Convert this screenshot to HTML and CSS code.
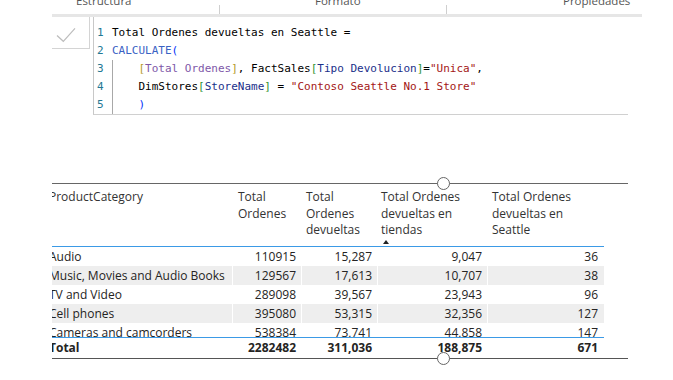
FILE: index.html
```html
<!DOCTYPE html>
<html lang="es">
<head>
<meta charset="utf-8">
<title>DAX</title>
<link rel="stylesheet" href="styles.css">
</head>
<body>
<div class="tabs">
  <div class="tab tab-1">Estructura</div>
  <div class="tab-sep"></div>
  <div class="tab tab-2">Formato</div>
  <div class="tab-sep"></div>
  <div class="tab tab-3">Propiedades</div>
</div>
<div class="band"></div>
<div class="formula">
  <div class="commit">
    <svg class="check" width="38" height="31" viewBox="0 0 38 31"><path d="M5 18.5 L11.3 24.3 L23 11.3" fill="none" stroke="#bdbdbd" stroke-width="1.2"/></svg>
  </div>
  <div class="editor">
    <div class="line"><span class="ln">1</span><span class="code">Total Ordenes devueltas en Seattle =</span></div>
    <div class="line"><span class="ln">2</span><span class="code"><span class="fn">CALCULATE</span><span class="p1">(</span></span></div>
    <div class="line"><span class="ln">3</span><span class="code"><span class="indent"></span><span class="bm">[</span><span class="ms">Total Ordenes</span><span class="bm">]</span>, FactSales<span class="bc">[</span><span class="col">Tipo Devolucion</span><span class="bc">]</span>=<span class="str">"Unica"</span>,</span></div>
    <div class="line"><span class="ln">4</span><span class="code"><span class="indent"></span>DimStores<span class="bc">[</span><span class="col">StoreName</span><span class="bc">]</span> = <span class="str">"Contoso Seattle No.1 Store"</span></span></div>
    <div class="line"><span class="ln">5</span><span class="code"><span class="indent"></span><span class="p1">)</span></span></div>
  </div>
</div>
<div class="visual">
  <span class="handle handle-top"></span>
  <div class="clip">
    <div class="grid">
      <div class="row hdr">
        <div class="c">ProductCategory</div>
        <div class="c">Total Ordenes</div>
        <div class="c">Total Ordenes devueltas</div>
        <div class="c">Total Ordenes devueltas en tiendas<div class="sort"></div></div>
        <div class="c">Total Ordenes devueltas en Seattle</div>
      </div>
      <div class="body">
        <div class="row r"><div class="c">Audio</div><div class="c n">110915</div><div class="c n">15,287</div><div class="c n">9,047</div><div class="c n">36</div></div>
        <div class="row r alt"><div class="c">Music, Movies and Audio Books</div><div class="c n">129567</div><div class="c n">17,613</div><div class="c n">10,707</div><div class="c n">38</div></div>
        <div class="row r"><div class="c">TV and Video</div><div class="c n">289098</div><div class="c n">39,567</div><div class="c n">23,943</div><div class="c n">96</div></div>
        <div class="row r alt"><div class="c">Cell phones</div><div class="c n">395080</div><div class="c n">53,315</div><div class="c n">32,356</div><div class="c n">127</div></div>
        <div class="row r"><div class="c">Cameras and camcorders</div><div class="c n">538384</div><div class="c n">73,741</div><div class="c n">44,858</div><div class="c n">147</div></div>
      </div>
      <div class="row tot"><div class="c">Total</div><div class="c n">2282482</div><div class="c n">311,036</div><div class="c n">188,875</div><div class="c n">671</div></div>
    </div>
  </div>
  <span class="handle handle-bottom"></span>
</div>
</body>
</html>
```
FILE: styles.css
```css
* { box-sizing: border-box; }
html, body { margin: 0; padding: 0; }
body {
  width: 673px;
  height: 380px;
  overflow: hidden;
  background: #fff;
  font-family: "Open Sans", "Noto Sans", sans-serif;
  color: #252423;
}

/* top tabs (cut at the top edge) */
.tabs { display: flex; height: 14px; overflow: hidden; }
.tab {
  font-size: 11.5px;
  line-height: 16px;
  margin-top: -7px;
  color: #555;
  white-space: nowrap;
}
.tab-1 { width: 219px; padding-left: 76px; }
.tab-2 { width: 226px; padding-left: 95px; }
.tab-3 { padding-left: 116px; }
.tab-sep { width: 1px; height: 10px; margin-top: 5px; background: #cfcfcf; }

.band { margin-left: 52px; width: 590px; height: 3px; background: #e6e6e6; }

/* formula bar */
.formula { display: flex; margin-left: 52px; height: 98px; }
.commit {
  width: 38px;
  height: 32px;
  border-right: 1px solid #d4d4d4;
  border-bottom: 1px solid #d4d4d4;
}
.check { display: block; }
.editor {
  margin-left: 3px;
  width: 535px;
  height: 98px;
  border-left: 1px solid #c8c8c8;
  border-bottom: 1px solid #d0d0d0;
  padding: 7px 0 0 3px;
  font-family: "DejaVu Sans Mono", "Liberation Mono", monospace;
  font-size: 11px;
  line-height: 18px;
  color: #000;
}
.line { display: flex; height: 18px; }
.ln { width: 15px; color: #237893; }
.code { white-space: pre; }
.indent {
  display: inline-block;
  width: 4ch;
  height: 18px;
  vertical-align: top;
  border-left: 1px solid #a8a8a8;
}
.fn { color: #3a62c4; }
.p1 { color: #0431fa; }
.bm { color: #b59a2a; }
.ms { color: #7e57a8; }
.bc { color: #319331; }
.col { color: #1a2f8a; }
.str { color: #a31515; }

/* table visual */
.visual {
  position: relative;
  margin: 68px 0 0 52px;
  width: 576px;
  border-top: 1px solid #666;
  border-bottom: 1px solid #555;
}
.handle {
  position: absolute;
  left: 385px;
  width: 13px;
  height: 13px;
  border: 1px solid #666;
  border-radius: 50%;
  background: #fff;
}
.handle-top { top: -7px; }
.handle-bottom { bottom: -7px; }
.clip { overflow: hidden; }
.grid { margin-left: -7px; width: 559px; font-size: 12px; }
.row { display: grid; grid-template-columns: 187px 69px 76px 110px 117px; }

.hdr { height: 63px; border-bottom: 1px solid #3b9ae6; align-items: start; }
.hdr .c { padding: 5px 5px 0; line-height: 16.5px; color: #333; }
.hdr .c:first-child { padding-left: 4px; }
.hdr .c:nth-child(2) { padding-left: 6px; }
.hdr .c:nth-child(4) { padding-left: 4px; }
.sort {
  width: 0;
  height: 0;
  margin: 1px 0 0 2px;
  border-left: 3.5px solid transparent;
  border-right: 3.5px solid transparent;
  border-bottom: 4px solid #222;
}

.body { height: 90px; overflow: hidden; }
.r { height: 19px; line-height: 19px; }
.r .c { padding: 0 5px; white-space: nowrap; color: #252423; }
.r .c + .c { border-left: 1px solid #fff; }
.r.alt .c { background: #eeeeee; }
.c:first-child { padding-left: 4px; }
.n { text-align: right; }
.c:nth-child(5) { padding-right: 6px; }

.tot {
  height: 21px;
  line-height: 20px;
  border-top: 1px solid #3b9ae6;
  font-weight: 700;
}
.tot .c { padding: 0 5px; white-space: nowrap; }
.tot .c:first-child { padding-left: 4px; }
.tot .c:nth-child(5) { padding-right: 6px; }
```
